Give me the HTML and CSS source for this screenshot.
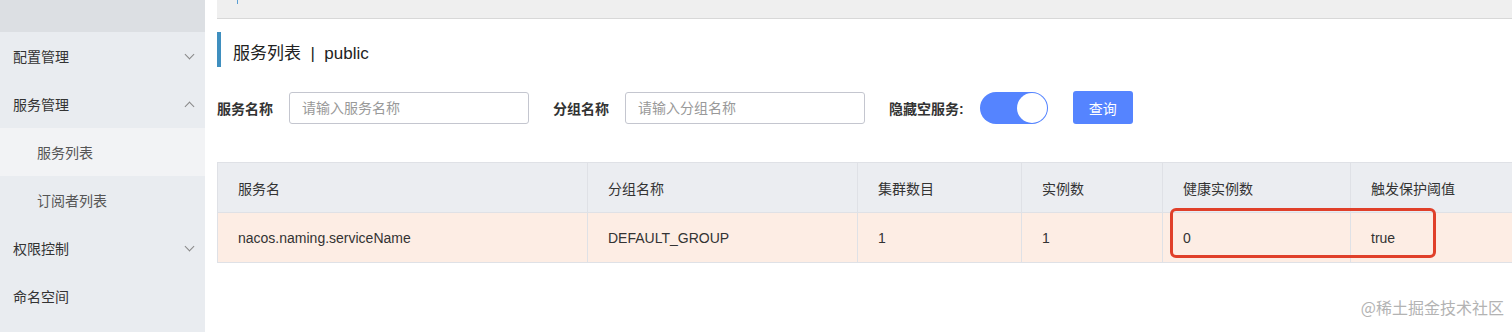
FILE: index.html
```html
<!DOCTYPE html>
<html lang="zh-CN">
<head>
  <meta charset="UTF-8">
  <title>Nacos - 服务列表</title>
  <link rel="stylesheet" href="styles.css">
</head>
<body>
  <div class="layout">
    <aside class="sidebar">
      <div class="side-top"></div>
      <div class="menu-item">配置管理 <span class="chev down"></span></div>
      <div class="menu-item">服务管理 <span class="chev up"></span></div>
      <div class="menu-sub active">服务列表</div>
      <div class="menu-sub">订阅者列表</div>
      <div class="menu-item">权限控制 <span class="chev down"></span></div>
      <div class="menu-item">命名空间</div>
    </aside>

    <main class="main">
      <div class="topbar"><span class="tick"></span></div>

      <h1 class="page-title">服务列表 &nbsp;|&nbsp; public</h1>

      <div class="search-row">
        <label class="field-label">服务名称</label>
        <input class="field-input" type="text" placeholder="请输入服务名称">
        <label class="field-label">分组名称</label>
        <input class="field-input" type="text" placeholder="请输入分组名称">
        <label class="field-label">隐藏空服务:</label>
        <span class="switch"><span class="knob"></span></span>
        <button class="btn">查询</button>
      </div>

      <div class="table-wrap">
        <table class="svc-table">
          <thead>
            <tr>
              <th class="c1">服务名</th>
              <th class="c2">分组名称</th>
              <th class="c3">集群数目</th>
              <th class="c4">实例数</th>
              <th class="c5">健康实例数</th>
              <th class="c6">触发保护阈值</th>
            </tr>
          </thead>
          <tbody>
            <tr>
              <td>nacos.naming.serviceName</td>
              <td>DEFAULT_GROUP</td>
              <td>1</td>
              <td>1</td>
              <td>0</td>
              <td>true</td>
            </tr>
          </tbody>
        </table>
        <div class="highlight"></div>
      </div>

      <div class="watermark">@稀土掘金技术社区</div>
    </main>
  </div>
</body>
</html>
```

FILE: styles.css
```css
* {
  box-sizing: border-box;
}
html, body {
  margin: 0;
  padding: 0;
  background: #fff;
}
body {
  font-family: "Liberation Sans", "Noto Sans CJK SC", sans-serif;
  font-size: 14px;
  color: #333;
  width: 1512px;
  height: 332px;
  overflow: hidden;
}
.layout {
  display: flex;
  height: 332px;
}

/* sidebar */
.sidebar {
  width: 205px;
  flex: none;
  background: #e9ecf0;
}
.side-top {
  height: 32px;
  background: #dcdfe3;
}
.menu-item, .menu-sub {
  height: 48px;
  display: flex;
  align-items: center;
  padding-left: 13px;
  padding-right: 12px;
  color: #333;
}
.menu-sub {
  padding-left: 37px;
  color: #555;
}
.menu-sub.active {
  background: #f2f3f5;
}
.chev {
  margin-left: auto;
  width: 7px;
  height: 7px;
  border-right: 1px solid #888;
  border-bottom: 1px solid #888;
}
.chev.down {
  transform: rotate(45deg);
  margin-top: -4px;
}
.chev.up {
  transform: rotate(-135deg);
  margin-top: 4px;
}

/* main */
.main {
  flex: 1;
  padding-left: 12px;
  position: relative;
}
.topbar {
  height: 19px;
  background: #efefef;
  border-bottom: 1px solid #d8d8d8;
  position: relative;
}
.tick {
  position: absolute;
  left: 20px;
  top: 0;
  width: 1px;
  height: 4px;
  background: #5a9fd4;
}
.page-title {
  margin: 13px 0 0;
  height: 35px;
  padding-top: 8px;
  line-height: 27px;
  font-size: 17px;
  font-weight: normal;
  color: #222;
  border-left: 4px solid #3f8fbf;
  padding-left: 12px;
}
.search-row {
  display: flex;
  align-items: center;
  margin-top: 24px;
  height: 33px;
}
.field-label {
  font-weight: bold;
  color: #333;
  margin-right: 16px;
}
.field-input {
  width: 240px;
  height: 32px;
  border: 1px solid #c4c6cf;
  border-radius: 3px;
  padding: 0 12px;
  font-family: inherit;
  font-size: 14px;
  margin-right: 24px;
}
.field-input::placeholder {
  color: #999;
}
.switch {
  width: 68px;
  height: 32px;
  border-radius: 16px;
  background: #5584ff;
  position: relative;
  margin-right: 25px;
}
.knob {
  position: absolute;
  right: 1px;
  top: 1px;
  width: 30px;
  height: 30px;
  border-radius: 50%;
  background: #fff;
}
.btn {
  width: 60px;
  height: 33px;
  border: none;
  border-radius: 3px;
  background: #5584ff;
  color: #fff;
  font-family: inherit;
  font-size: 14px;
}

/* table */
.table-wrap {
  margin-top: 38px;
  position: relative;
}
.svc-table {
  border-collapse: collapse;
  width: 1300px;
  table-layout: fixed;
}
.svc-table th, .svc-table td {
  height: 50px;
  padding: 0 20px;
  text-align: left;
  font-weight: normal;
  border: 1px solid #dfe1e6;
  color: #333;
}
.svc-table th {
  background: #ebedf1;
}
.svc-table td {
  background: #fdede4;
}
.c1 { width: 370px; }
.c2 { width: 270px; }
.c3 { width: 164px; }
.c4 { width: 141px; }
.c5 { width: 188px; }
.c6 { width: 167px; }

.highlight {
  position: absolute;
  left: 953px;
  top: 46px;
  width: 266px;
  height: 50px;
  border: 3px solid #e0402a;
  border-radius: 6px;
}
.watermark {
  position: absolute;
  right: 14px;
  bottom: 13px;
  font-family: "Noto Sans CJK SC", sans-serif;
  font-size: 16px;
  color: #b3b3b3;
}
```
